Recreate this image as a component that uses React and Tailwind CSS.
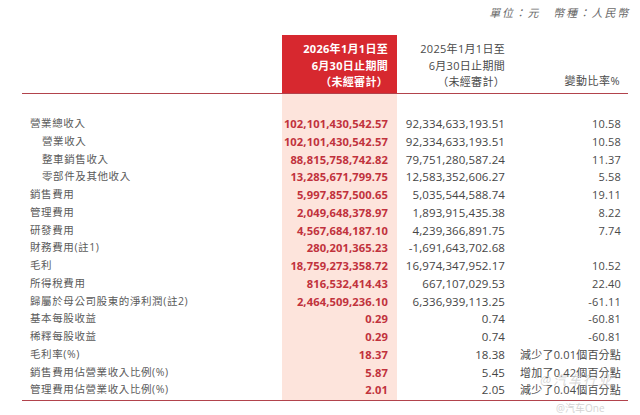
import React from "react";

const rows = [
  { label: "營業總收入", indent: false, cur: "102,101,430,542.57", prev: "92,334,633,193.51", chg: "10.58" },
  { label: "營業收入", indent: true, cur: "102,101,430,542.57", prev: "92,334,633,193.51", chg: "10.58" },
  { label: "整車銷售收入", indent: true, cur: "88,815,758,742.82", prev: "79,751,280,587.24", chg: "11.37" },
  { label: "零部件及其他收入", indent: true, cur: "13,285,671,799.75", prev: "12,583,352,606.27", chg: "5.58" },
  { label: "銷售費用", indent: false, cur: "5,997,857,500.65", prev: "5,035,544,588.74", chg: "19.11" },
  { label: "管理費用", indent: false, cur: "2,049,648,378.97", prev: "1,893,915,435.38", chg: "8.22" },
  { label: "研發費用", indent: false, cur: "4,567,684,187.10", prev: "4,239,366,891.75", chg: "7.74" },
  { label: "財務費用(註1)", indent: false, cur: "280,201,365.23", prev: "-1,691,643,702.68", chg: "" },
  { label: "毛利", indent: false, cur: "18,759,273,358.72", prev: "16,974,347,952.17", chg: "10.52" },
  { label: "所得稅費用", indent: false, cur: "816,532,414.43", prev: "667,107,029.53", chg: "22.40" },
  { label: "歸屬於母公司股東的淨利潤(註2)", indent: false, cur: "2,464,509,236.10", prev: "6,336,939,113.25", chg: "-61.11" },
  { label: "基本每股收益", indent: false, cur: "0.29", prev: "0.74", chg: "-60.81" },
  { label: "稀釋每股收益", indent: false, cur: "0.29", prev: "0.74", chg: "-60.81" },
  { label: "毛利率(%)", indent: false, cur: "18.37", prev: "18.38", chg: "減少了0.01個百分點" },
  { label: "銷售費用佔營業收入比例(%)", indent: false, cur: "5.87", prev: "5.45", chg: "增加了0.42個百分點" },
  { label: "管理費用佔營業收入比例(%)", indent: false, cur: "2.01", prev: "2.05", chg: "減少了0.04個百分點" },
];

const font = "font-['Open_Sans','Noto_Sans_CJK_TC',sans-serif]";

export default function App() {
  return (
    <div className={`relative w-[640px] h-[415px] bg-white overflow-hidden ${font}`}>
      {/* unidad */}
      <div className="flex justify-end h-[35px] pr-[10px] pt-[5px]">
        <span className="text-[11px] leading-[16px] italic tracking-[1.8px] text-[#6a6a6a]">
          單位：元　幣種：人民幣
        </span>
      </div>

      <div className="ml-[22px] w-[606px]">
        {/* encabezado */}
        <div className="grid grid-cols-[260px_115px_113px_118px] h-[59px] border-b-[1.5px] border-[#b2434c]">
          <div />
          <div className="bg-[#d7282f] pt-[6px] pr-[9px] text-right text-[11px] leading-[16.5px] font-bold tracking-[0.3px] text-white">
            <div>2026年1月1日至</div>
            <div>6月30日止期間</div>
            <div>（未經審計）</div>
          </div>
          <div className="pt-[6px] pr-[5px] text-right text-[11px] leading-[16.5px] tracking-[0.3px] text-[#4a4a4a]">
            <div>2025年1月1日至</div>
            <div>6月30日止期間</div>
            <div>（未經審計）</div>
          </div>
          <div className="flex flex-col justify-end pb-[4px] pr-[8px] text-right text-[11px] leading-[16.5px] tracking-[0.5px] text-[#4a4a4a]">
            <div>變動比率%</div>
          </div>
        </div>

        {/* cuerpo */}
        <div className="border-b-[1.5px] border-[#b2434c]">
          <div className="grid grid-cols-[260px_115px_113px_118px] h-[21px]">
            <div />
            <div className="bg-[#fde4dc]" />
          </div>
          {rows.map((r, i) => (
            <div key={i} className="grid grid-cols-[260px_115px_113px_118px] h-[17.75px] items-center text-[11px] leading-[17.75px]">
              <div className={`${r.indent ? "pl-[20px]" : "pl-[8px]"} text-[10.5px] tracking-[0.6px] text-[#5a5a5a] whitespace-nowrap`}>
                {r.label}
              </div>
              <div className="h-full bg-[#fde4dc] pr-[9px] text-right text-[11.2px] font-bold tracking-[0.1px] text-[#c1323c]">
                {r.cur}
              </div>
              <div className="pr-[5px] text-right text-[11.5px] tracking-[0.1px] text-[#454545]">{r.prev}</div>
              <div className="pr-[7px] text-right text-[11px] tracking-[0.2px] text-[#4a4a4a] whitespace-nowrap">{r.chg}</div>
            </div>
          ))}
          <div className="grid grid-cols-[260px_115px_113px_118px] h-[1px]">
            <div />
            <div className="bg-[#fde4dc]" />
          </div>
        </div>
      </div>

      {/* marca de agua */}
      <span className="absolute left-[540px] top-[371px] text-[13px] text-[#cfcfcf]/80 tracking-[2px] italic">
        @汽车行业
      </span>
      <span className="absolute left-[556px] top-[402px] text-[10px] leading-[12px] text-[#d4d4d4]">
        @汽车One
      </span>
    </div>
  );
}
